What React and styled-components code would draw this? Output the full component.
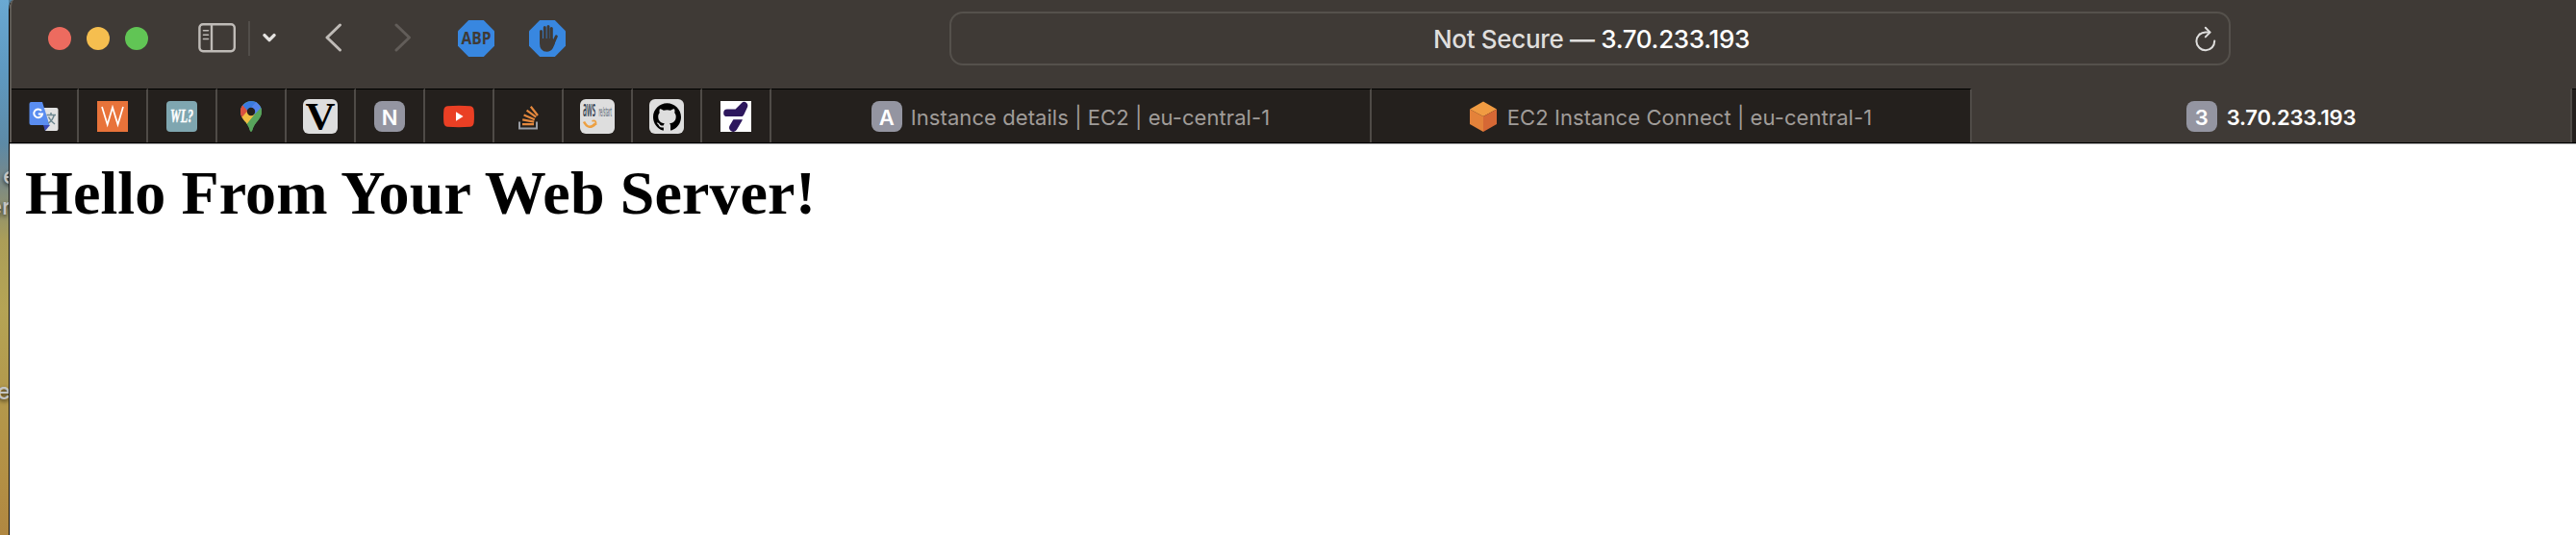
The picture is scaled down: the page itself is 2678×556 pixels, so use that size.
import React from "react";
import styled, { createGlobalStyle } from "styled-components";
import { SiGithub } from "react-icons/si";

const Global = createGlobalStyle`
  * { box-sizing: border-box; }
  html, body { margin: 0; padding: 0; overflow: hidden; }
  svg { display: block; flex: none; }
`;

const Screen = styled.div`
  display: flex;
  width: 2678px;
  height: 556px;
  overflow: hidden;
  background: #507e9b;
  font-family: Inter, "Liberation Sans", sans-serif;
`;

const Desktop = styled.div`
  position: relative;
  flex: none;
  width: 9px;
  overflow: hidden;
  background: linear-gradient(#6aa9d2 0, #5f9ac2 70px, #5d8aa6 150px, #76888a 185px, #93936c 220px, #ab9e58 250px, #b5a455 320px, #b39a4d 400px, #b38f44 500px, #b08741 556px);
`;

const FileLabel = styled.span`
  position: absolute;
  top: ${(p) => p.$top}px;
  left: ${(p) => p.$left}px;
  font-size: 24px;
  line-height: 28px;
  font-weight: 500;
  color: #c4c4c2;
  text-shadow: 0 2px 4px rgba(0, 0, 0, 0.7);
`;

const Window = styled.div`
  flex: 1;
  min-width: 0;
  display: flex;
  flex-direction: column;
  border-left: 1px solid #050505;
  border-top-left-radius: 5px 10px;
  background: #fff;
`;

const Chrome = styled.div`
  flex: none;
  border-left: 2px solid #5e5a55;
  border-top-left-radius: 4px 9px;
  background: #3f3a36;
`;

const Toolbar = styled.div`
  display: flex;
  align-items: center;
  height: 80px;
  margin-bottom: 12px;
  padding-left: 38px;
`;

const Lights = styled.div`
  display: flex;
  gap: 16px;
  margin-right: 52px;
`;

const Light = styled.span`
  width: 24px;
  height: 24px;
  border-radius: 50%;
  background: ${(p) => p.$color};
`;

const Divider = styled.span`
  width: 2px;
  height: 36px;
  margin: 0 13px 0 12px;
  background: #524e4a;
`;

const ToolIcon = styled.span`
  margin-left: ${(p) => p.$gap || 0}px;
`;

const AddressBar = styled.div`
  display: flex;
  align-items: center;
  width: 1332px;
  height: 56px;
  margin-left: 399px;
  padding: 0 12px 0 39px;
  border: 2px solid #55514c;
  border-radius: 14px;
`;

const Address = styled.div`
  flex: 1;
  padding-top: 2px;
  text-align: center;
  white-space: pre;
  font-size: 26px;
  line-height: 32px;
  letter-spacing: -0.33px;
  font-weight: 500;
  color: #dfdedd;
  b { font-weight: 500; color: #fff; }
`;

const TabBar = styled.div`
  display: flex;
  height: 56px;
`;

const TabBase = styled.div`
  display: flex;
  align-items: center;
  justify-content: center;
  flex: none;
  height: 56px;
  padding-top: 1px;
  border-top: 1px solid ${(p) => (p.$active ? "#3f3a36" : "#000")};
  background: ${(p) => (p.$active ? "#3f3a36" : "#24201d")};
  border-right: 2px solid #4f4b47;
`;

const PinnedTab = styled(TabBase)`
  width: ${(p) => p.$width || 72}px;
`;

const Tab = styled(TabBase)`
  width: 624px;
  gap: ${(p) => p.$gap || 9}px;
`;

const Remainder = styled.div`
  flex: 1;
  border-top: 1px solid #000;
  background: #24201d;
`;

const TabTitle = styled.span`
  padding-top: 1px;
  font-size: 22px;
  line-height: 28px;
  white-space: nowrap;
  font-weight: ${(p) => (p.$active ? 600 : 400)};
  letter-spacing: ${(p) => (p.$active ? -0.2 : 0.07)}px;
  color: ${(p) => (p.$active ? "#fff" : "#a09c99")};
`;

const Badge = styled.span`
  display: flex;
  align-items: center;
  justify-content: center;
  flex: none;
  width: ${(p) => p.$size || 32}px;
  height: ${(p) => p.$size || 32}px;
  border-radius: ${(p) => (p.$radius === undefined ? 8 : p.$radius)}px;
  background: ${(p) => p.$bg || "#9495a1"};
  color: #fff;
  font-size: 22px;
  line-height: 30px;
  font-weight: 600;
`;

const Letter = styled.span`
  padding-top: 2px;
`;

const Page = styled.main`
  flex: 1;
  border-top: 1px solid #b9b9b9;
  box-shadow: 0 -1px 0 #000;
  margin-top: 1px;
  padding: 14px 16px;
`;

const Heading = styled.h1`
  margin: 0;
  font: bold 64px/74px "Liberation Serif", serif;
  letter-spacing: 0.12px;
  color: #000;
`;

const SidebarIcon = () => (
  <svg width="40" height="32" viewBox="0 0 40 32" fill="none" stroke="#bfbbb7" strokeWidth="2.4">
    <rect x="1.4" y="1.2" width="36.4" height="28" rx="3.6" />
    <path d="M14 1v28" />
    <path d="M5.5 7.8h5M5.5 12.2h5M5.5 16.5h5" strokeWidth="1.6" strokeLinecap="round" />
  </svg>
);

const Arrow = ({ color, forward }) => (
  <svg width="18" height="32" viewBox="0 0 18 32" fill="none" stroke={color} strokeWidth="3" strokeLinecap="round" strokeLinejoin="round">
    <path d={forward ? "M2 2L15.500 15L2 28" : "M15.500 2L2 15L15.500 28"} />
  </svg>
);

const Octagon = ({ children }) => (
  <svg width="38" height="38" viewBox="0 0 38 38">
    <path d="M11.2 0h15.6L38 11.2v15.6L26.8 38H11.2L0 26.8V11.2z" fill="#3887e0" />
    {children}
  </svg>
);

const Reload = () => (
  <svg width="24" height="32" viewBox="0 0 24 32" fill="none" stroke="#dfdedd" strokeWidth="2" strokeLinecap="round" strokeLinejoin="round">
    <path d="M21.2 18.4A9.4 9.4 0 1 1 11.8 9.400h4.600" />
    <path d="M11.8 4.800l4.700 4.800l-4.700 4.800" />
  </svg>
);

const Translate = () => (
  <svg width="32" height="32" viewBox="0 0 32 32">
    <path d="M14 7h14.5q2 0 2 2v20q0 2-2 2H17z" fill="#e2e2e2" />
    <path d="M15 25h7l-5 6z" fill="#3a49b5" />
    <path d="M2.500 1H14l7.500 24H2.500Q.5 25 .5 23V3Q.5 1 2.500 1z" fill="#5a8df0" />
    <path d="M13 10A4.400 4.400 0 1 0 14 13.500H9.800" fill="none" stroke="#fff" strokeWidth="2" />
    <path d="M18.500 14.500H28M23 12v2.500M26.300 14.500q-1.500 5.500-6 8.500M20.500 16.500q2 4.500 6.500 7.500" fill="none" stroke="#6d8790" strokeWidth="1.500" />
  </svg>
);

const MapPin = () => (
  <svg width="32" height="32" viewBox="0 0 32 32">
    <defs>
      <clipPath id="pin">
        <path d="M16 0C10 0 5 4.700 5 11c0 8 7.500 10.500 9.800 19.500Q16 33 17.200 30.500C19.500 21.500 27 19 27 11C27 4.700 22 0 16 0z" />
      </clipPath>
    </defs>
    <g clipPath="url(#pin)">
      <path d="M0 0h32v32H0z" fill="#58a55c" />
      <path d="M6 4L16 11L5 24L0 18z" fill="#d85140" />
      <path d="M3 20L13 8L20 14L9 27z" fill="#f1be42" />
      <path d="M0 0L7 3.500L13.500 9L5.500 18L0 14z" fill="#d85140" />
      <path d="M7 4L16-2h10L13 11z" fill="#3a7be0" />
      <path d="M22 0L29 8L17 15L14 9z" fill="#5383ec" />
      <path d="M28 5L18 16L8 29L18 34L30 20z" fill="#58a55c" />
    </g>
    <circle cx="16" cy="11" r="4.200" fill="#24201d" />
  </svg>
);

const YouTube = () => (
  <svg width="32" height="32" viewBox="0 0 32 32">
    <path d="M4 5.300Q16 4.400 28 5.300Q31.500 5.800 31.700 10Q32.200 16 31.700 22Q31.500 26.200 28 26.700Q16 27.600 4 26.700Q.5 26.200.3 22Q-.2 16 .3 10Q.5 5.800 4 5.300z" fill="#ea3f24" />
    <path d="M13 11.300l7.600 4.700l-7.600 4.700z" fill="#fff" />
  </svg>
);

const StackOverflow = () => (
  <svg width="32" height="32" viewBox="0 0 32 32" fill="none" strokeWidth="2.200">
    <path d="M7 21.500v7h18v-7" stroke="#9a9da4" strokeWidth="2" />
    <path d="M10 24.200h12M10.200 19.400l12 2.200M11.600 14.600l11.200 4.600M14.600 9.600l9.600 7M18.800 5.800l7.200 9.200" stroke="#e5883d" />
  </svg>
);

const Swoosh = () => (
  <svg width="32" height="32" viewBox="0 0 32 32">
    <path d="M0 0h32v32H0z" fill="#fff" />
    <path d="M7 12.400h10L24.500 4.800L21 12.400" fill="none" stroke="#2d175d" strokeWidth="7.600" strokeLinejoin="round" strokeLinecap="round" />
    <path d="M18.600 18.700L13.300 27.700" stroke="#2d175d" strokeWidth="8.500" strokeLinecap="round" />
    <path d="M6 16h19v3.200H6z" fill="#fff" />
  </svg>
);

const AwsIcon = () => (
  <svg width="36" height="36" viewBox="0 0 36 36">
    <text x="3" y="18" fontSize="24" fontWeight="600" fill="#2f3b4c" textLength="13" lengthAdjust="spacingAndGlyphs" fontFamily="Open Sans, sans-serif">aws</text>
    <text x="19.500" y="18" fontSize="14" fill="#6a7380" textLength="13.500" lengthAdjust="spacingAndGlyphs" fontFamily="Open Sans, sans-serif">re/start</text>
    <path d="M4 23.500q5 9.500 12 2" fill="none" stroke="#eda042" strokeWidth="2.600" />
    <path d="M12.500 22.800q4.500-1.800 4 4" fill="none" stroke="#eda042" strokeWidth="1.800" />
  </svg>
);

const Cube = () => (
  <svg width="28" height="32" viewBox="0 0 28 32">
    <path d="M14 .5L28 8.500L14 16L0 8.500z" fill="#f09b42" />
    <path d="M0 8.500L14 16v16L0 24z" fill="#e4823a" />
    <path d="M28 8.500L14 16v16l14-8z" fill="#d66835" />
  </svg>
);

export default function App() {
  return (
    <Screen>
      <Global />
      <Desktop>
        <FileLabel $top={169} $left={3}>e</FileLabel>
        <FileLabel $top={201} $left={-12}>er</FileLabel>
        <FileLabel $top={393} $left={-3}>e</FileLabel>
      </Desktop>
      <Window>
        <Chrome>
          <Toolbar>
            <Lights>
              <Light $color="#ed6b5f" />
              <Light $color="#f5be4f" />
              <Light $color="#61c555" />
            </Lights>
            <SidebarIcon />
            <Divider />
            <svg width="14" height="12" viewBox="0 0 14 12" fill="none" stroke="#e5e3e1" strokeWidth="3.400" strokeLinecap="round" strokeLinejoin="round">
              <path d="M2 2.600l5 5l5-5" />
            </svg>
            <ToolIcon $gap={51}><Arrow color="#bfbbb7" /></ToolIcon>
            <ToolIcon $gap={54}><Arrow color="#625d59" forward /></ToolIcon>
            <ToolIcon $gap={48}>
              <Octagon>
                <text x="19" y="25" textAnchor="middle" fontSize="18" fontWeight="700" fill="#3f3a36" textLength="31" lengthAdjust="spacingAndGlyphs" fontFamily="Open Sans, sans-serif">ABP</text>
              </Octagon>
            </ToolIcon>
            <ToolIcon $gap={36}>
              <Octagon>
                <g fill="none" stroke="#3f3a36" strokeWidth="3" strokeLinecap="round">
                  <path d="M12.500 11.500V22M16.300 7.500V20M20 6.400V20M23.300 8.500V20" />
                  <path d="M28.300 16.800L24.500 25" />
                </g>
                <path d="M11 19h13.800l1 2l2.200-2q-1 6-3.200 10Q22.500 32.800 18.500 32.800Q11 32.500 11 24z" fill="#3f3a36" />
              </Octagon>
            </ToolIcon>
            <AddressBar>
              <Address>Not Secure — <b>3.70.233.193</b></Address>
              <Reload />
            </AddressBar>
          </Toolbar>
          <TabBar>
            <PinnedTab $width={70}><Translate /></PinnedTab>
            <PinnedTab>
              <Badge $bg="#e8733a" $radius={0}>
                <svg width="24" height="24" viewBox="0 0 24 24" fill="none" stroke="#fff" strokeWidth="1.700">
                  <path d="M1 2L6.700 20.500L12 2.500L17.500 20.500L23 2" />
                </svg>
              </Badge>
            </PinnedTab>
            <PinnedTab>
              <Badge $bg="#7fa6b0" $radius={4}>
                <svg width="32" height="32" viewBox="0 0 32 32">
                  <text x="4" y="21.500" fontSize="18" fontStyle="italic" fontWeight="700" fill="#fff" stroke="#fff" strokeWidth="0.400" textLength="24" lengthAdjust="spacingAndGlyphs" fontFamily="Liberation Serif, serif">WL?</text>
                </svg>
              </Badge>
            </PinnedTab>
            <PinnedTab><MapPin /></PinnedTab>
            <PinnedTab>
              <Badge $size={36} $radius={6} $bg="#dedede">
                <svg width="36" height="36" viewBox="0 0 36 36">
                  <text x="2.500" y="31" fontSize="41" fontWeight="700" fill="#000" textLength="31" lengthAdjust="spacingAndGlyphs" fontFamily="Liberation Serif, serif">V</text>
                </svg>
              </Badge>
            </PinnedTab>
            <PinnedTab><Badge><Letter>N</Letter></Badge></PinnedTab>
            <PinnedTab><YouTube /></PinnedTab>
            <PinnedTab><StackOverflow /></PinnedTab>
            <PinnedTab><Badge $size={36} $radius={6} $bg="#dedede"><AwsIcon /></Badge></PinnedTab>
            <PinnedTab><Badge $size={36} $radius={6} $bg="#dedede"><SiGithub size={29} color="#000" /></Badge></PinnedTab>
            <PinnedTab><Swoosh /></PinnedTab>
            <Tab>
              <Badge><Letter>A</Letter></Badge>
              <TabTitle>Instance details | EC2 | eu-central-1</TabTitle>
            </Tab>
            <Tab $gap={11}>
              <Cube />
              <TabTitle>EC2 Instance Connect | eu-central-1</TabTitle>
            </Tab>
            <Tab $active $gap={10}>
              <Badge><Letter>3</Letter></Badge>
              <TabTitle $active>3.70.233.193</TabTitle>
            </Tab>
            <Remainder />
          </TabBar>
        </Chrome>
        <Page>
          <Heading>Hello From Your Web Server!</Heading>
        </Page>
      </Window>
    </Screen>
  );
}
